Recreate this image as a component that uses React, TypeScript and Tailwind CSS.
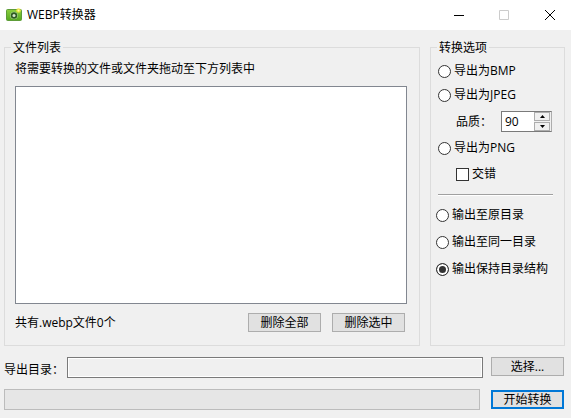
import { useState } from 'react';
import type { ReactNode } from 'react';

const formats = ['BMP', 'JPEG', 'PNG'];

const outputModes = [
  { id: 'source', label: '输出至原目录' },
  { id: 'single', label: '输出至同一目录' },
  { id: 'keep', label: '输出保持目录结构' }
];

const radioClass =
  'appearance-none shrink-0 w-[13px] h-[13px] rounded-full border border-[#333333] bg-white checked:bg-[#333333] checked:shadow-[inset_0_0_0_2px_white]';

function CameraIcon() {
  return (
    <svg className="w-4 h-4" viewBox="0 0 16 16" aria-hidden="true">
      <defs>
        <linearGradient id="camera-body" x1="0" y1="0" x2="0" y2="1">
          <stop offset="0" stopColor="#8ccf3f" />
          <stop offset="1" stopColor="#55a81e" />
        </linearGradient>
      </defs>
      <rect x="2" y="2" width="4" height="2" fill="#5a8f2c" />
      <rect x="0.5" y="2.5" width="15" height="11" rx="1" fill="url(#camera-body)" stroke="#5d9c38" />
      <circle cx="8" cy="8.5" r="3.8" fill="#a9d68a" />
      <circle cx="8" cy="8.5" r="3.2" fill="#2f5a22" />
      <circle cx="8" cy="8.5" r="1.5" fill="#d5e6cb" />
      <circle cx="12.5" cy="3.5" r="2.3" fill="#f5e63c" fillOpacity="0.85" />
      <circle cx="12.5" cy="3.5" r="1" fill="#fff9a8" />
    </svg>
  );
}

function TitleBar() {
  return (
    <header className="flex items-center h-[30px] pl-1.5 bg-white">
      <CameraIcon />
      <h1 className="flex-1 ml-[5px] font-normal">WEBP转换器</h1>
      <button type="button" aria-label="最小化" className="flex items-center justify-center w-[45px] h-full">
        <svg className="w-[11px] h-[11px]" viewBox="0 0 11 11">
          <path d="M1 5.5H11" stroke="#000000" />
        </svg>
      </button>
      <button type="button" aria-label="最大化" disabled className="flex items-center justify-center w-[45px] h-full">
        <svg className="w-[11px] h-[11px]" viewBox="0 0 11 11">
          <path d="M1.5 0.5H10.5V9.5H1.5Z" fill="none" stroke="#cccccc" />
        </svg>
      </button>
      <button type="button" aria-label="关闭" className="flex items-center justify-center w-[45px] h-full">
        <svg className="w-3 h-[11px]" viewBox="0 0 12 11">
          <path d="M2 0L12 10M12 0L2 10" stroke="#000000" />
        </svg>
      </button>
    </header>
  );
}

function PushButton({ children, primary = false }: { children: ReactNode; primary?: boolean }) {
  return (
    <button
      type="button"
      className={`flex items-center justify-center w-[73px] h-[19px] bg-[#e1e1e1] ${
        primary ? 'border-2 border-[#0078d7]' : 'border border-[#adadad]'
      }`}
    >
      {children}
    </button>
  );
}

function FileList() {
  return (
    <fieldset className="flex flex-col flex-1 min-w-0 border border-[#dcdcdc] pl-2.5 pr-3 pb-[13px]">
      <legend className="-ml-1 px-0.5 pt-0.5">文件列表</legend>
      <div className="flex flex-col flex-1 h-full pt-[5px]">
        <p id="drop-hint">将需要转换的文件或文件夹拖动至下方列表中</p>
        <ul aria-labelledby="drop-hint" className="flex-1 mt-[9px] border border-[#828790] bg-white" />
        <div className="flex items-center mt-[9px] pr-0.5 gap-[11px]">
          <span className="flex-1">共有.webp文件0个</span>
          <PushButton>删除全部</PushButton>
          <PushButton>删除选中</PushButton>
        </div>
      </div>
    </fieldset>
  );
}

function QualityField() {
  const [quality, setQuality] = useState(90);
  const step = (by: number) => setQuality((q) => Math.min(100, Math.max(0, q + by)));

  return (
    <div className="flex items-center justify-between pl-[18px]">
      <label htmlFor="quality">品质：</label>
      <div className="flex w-[51px] h-[21px] border border-[#7a7a7a] border-r-[#adadad] bg-white">
        <input
          id="quality"
          type="text"
          inputMode="numeric"
          className="flex-1 min-w-0 pl-[3px] outline-none"
          value={quality}
          onChange={(e) => setQuality(Number(e.target.value) || 0)}
        />
        <div className="flex flex-col w-[17px] gap-px pr-px bg-[#f0f0f0]">
          <button
            type="button"
            aria-label="增加"
            onClick={() => step(1)}
            className="flex flex-1 items-center justify-center border border-[#adadad]"
          >
            <svg className="w-[5px] h-[3px]" viewBox="0 0 5 3"><path d="M0 3L2.5 0L5 3Z" /></svg>
          </button>
          <button
            type="button"
            aria-label="减少"
            onClick={() => step(-1)}
            className="flex flex-1 items-center justify-center border border-[#adadad]"
          >
            <svg className="w-[5px] h-[3px]" viewBox="0 0 5 3"><path d="M0 0L2.5 3L5 0Z" /></svg>
          </button>
        </div>
      </div>
    </div>
  );
}

function Options() {
  const [format, setFormat] = useState('');
  const [mode, setMode] = useState('keep');
  const [interlaced, setInterlaced] = useState(false);

  return (
    <fieldset className="w-[135px] border border-[#dcdcdc] pl-[5px] pr-[11px]">
      <legend className="px-0.5 pt-0.5 ml-px">转换选项</legend>
      <div className="flex flex-col gap-2 pt-[7px] pl-0.5 pr-px">
        {formats.map((name) => (
          <div key={name} className="flex flex-col gap-2">
            <label className="flex items-center gap-[3px]">
              <input
                type="radio"
                name="format"
                className={radioClass}
                checked={format === name}
                onChange={() => setFormat(name)}
              />
              导出为{name}
            </label>
            {name === 'JPEG' && <QualityField />}
          </div>
        ))}
        <label className="flex items-center gap-[3px] pl-[18px] mt-0.5">
          <input
            type="checkbox"
            className="appearance-none shrink-0 w-[13px] h-[13px] border border-[#333333] bg-white checked:bg-[#333333] checked:shadow-[inset_0_0_0_2px_white]"
            checked={interlaced}
            onChange={(e) => setInterlaced(e.target.checked)}
          />
          交错
        </label>
      </div>
      <hr className="mt-3 ml-0.5 h-0.5 border-t border-b border-t-[#a0a0a0] border-b-white" />
      <div className="flex flex-col gap-[11px] mt-[11px]">
        {outputModes.map(({ id, label }) => (
          <label key={id} className="flex items-center gap-[3px] whitespace-nowrap">
            <input
              type="radio"
              name="output"
              className={radioClass}
              checked={mode === id}
              onChange={() => setMode(id)}
            />
            {label}
          </label>
        ))}
      </div>
    </fieldset>
  );
}

export default function App() {
  const [folder, setFolder] = useState('');

  return (
    <div className="flex flex-col min-h-screen bg-[#f0f0f0] text-black text-[12px] leading-4 font-['Open_Sans','Noto_Sans_CJK_SC',sans-serif]">
      <TitleBar />
      <main className="flex flex-col flex-1 pt-2 pl-1 pr-1.5 pb-2">
        <div className="flex flex-1 gap-2.5">
          <FileList />
          <Options />
        </div>
        {/* Output folder */}
        <div className="flex items-start mt-[11px] pr-px">
          <label htmlFor="folder" className="w-[63px] pt-[5px] whitespace-nowrap">导出目录：</label>
          <input
            id="folder"
            type="text"
            className="flex-1 min-w-0 h-[21px] mr-2 px-1 border border-[#7a7a7a] bg-[#f0f0f0] shadow-[inset_0_0_0_1px_white] outline-none"
            value={folder}
            onChange={(e) => setFolder(e.target.value)}
          />
          <PushButton>选择...</PushButton>
        </div>
        {/* Progress */}
        <div className="flex items-center gap-[11px] mt-[11px] pr-px">
          <div
            role="progressbar"
            aria-label="转换进度"
            aria-valuenow={0}
            aria-valuemin={0}
            aria-valuemax={100}
            className="flex-1 h-[21px] border border-[#bcbcbc] bg-[#e6e6e6]"
          />
          <PushButton primary>开始转换</PushButton>
        </div>
      </main>
    </div>
  );
}
